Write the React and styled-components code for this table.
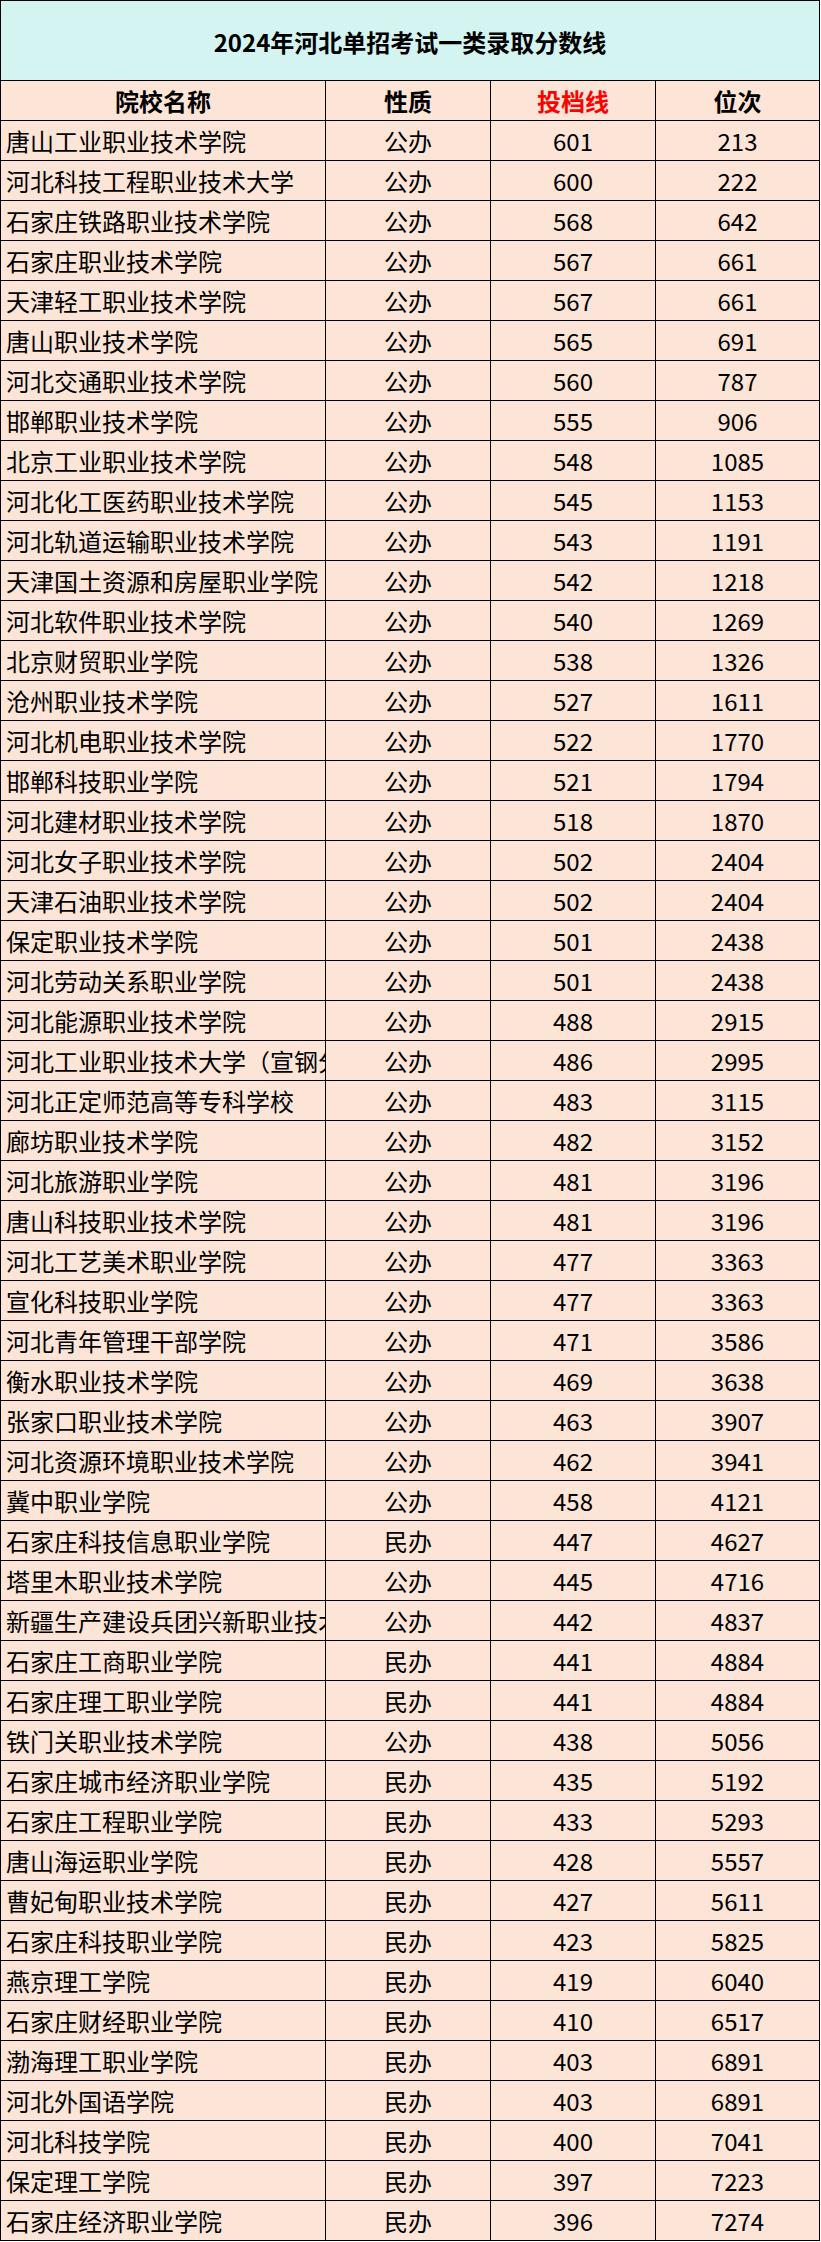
import React from "react";
import styled, { createGlobalStyle } from "styled-components";

const GlobalStyle = createGlobalStyle`
   html, body {
      margin: 0;
      padding: 0;
      background: #ffffff;
   }
   body {
      font-family: "Noto Sans CJK SC", "Noto Sans", sans-serif;
      color: #000;
   }
`;

const Table = styled.div`
   width: 820px;
   border-top: 1px solid #000;
   border-left: 1px solid #000;
   box-sizing: border-box;
`;

const Title = styled.div`
   height: 80px;
   box-sizing: border-box;
   border-right: 1px solid #000;
   border-bottom: 1px solid #000;
   background: #d4f4f2;
   display: flex;
   align-items: center;
   justify-content: center;
   font-size: 24px;
   font-weight: 700;
   padding-top: 2px;
`;

const Row = styled.div`
   display: grid;
   grid-template-columns: 325px 165px 165px 164px;
   height: 40px;
   background: #fce4d6;
`;

const Cell = styled.div`
   box-sizing: border-box;
   border-right: 1px solid #000;
   border-bottom: 1px solid #000;
   display: flex;
   align-items: center;
   justify-content: ${({ left }) => (left ? "flex-start" : "center")};
   padding-left: ${({ left }) => (left ? "5px" : "0")};
   font-size: 24px;
   font-weight: ${({ head }) => (head ? 700 : 400)};
   color: ${({ red }) => (red ? "#ff0000" : "#000")};
   white-space: nowrap;
   overflow: hidden;
   line-height: 1;
`;

const rows = [
   ["唐山工业职业技术学院", "公办", 601, 213],
   ["河北科技工程职业技术大学", "公办", 600, 222],
   ["石家庄铁路职业技术学院", "公办", 568, 642],
   ["石家庄职业技术学院", "公办", 567, 661],
   ["天津轻工职业技术学院", "公办", 567, 661],
   ["唐山职业技术学院", "公办", 565, 691],
   ["河北交通职业技术学院", "公办", 560, 787],
   ["邯郸职业技术学院", "公办", 555, 906],
   ["北京工业职业技术学院", "公办", 548, 1085],
   ["河北化工医药职业技术学院", "公办", 545, 1153],
   ["河北轨道运输职业技术学院", "公办", 543, 1191],
   ["天津国土资源和房屋职业学院", "公办", 542, 1218],
   ["河北软件职业技术学院", "公办", 540, 1269],
   ["北京财贸职业学院", "公办", 538, 1326],
   ["沧州职业技术学院", "公办", 527, 1611],
   ["河北机电职业技术学院", "公办", 522, 1770],
   ["邯郸科技职业学院", "公办", 521, 1794],
   ["河北建材职业技术学院", "公办", 518, 1870],
   ["河北女子职业技术学院", "公办", 502, 2404],
   ["天津石油职业技术学院", "公办", 502, 2404],
   ["保定职业技术学院", "公办", 501, 2438],
   ["河北劳动关系职业学院", "公办", 501, 2438],
   ["河北能源职业技术学院", "公办", 488, 2915],
   ["河北工业职业技术大学（宣钢分校）", "公办", 486, 2995],
   ["河北正定师范高等专科学校", "公办", 483, 3115],
   ["廊坊职业技术学院", "公办", 482, 3152],
   ["河北旅游职业学院", "公办", 481, 3196],
   ["唐山科技职业技术学院", "公办", 481, 3196],
   ["河北工艺美术职业学院", "公办", 477, 3363],
   ["宣化科技职业学院", "公办", 477, 3363],
   ["河北青年管理干部学院", "公办", 471, 3586],
   ["衡水职业技术学院", "公办", 469, 3638],
   ["张家口职业技术学院", "公办", 463, 3907],
   ["河北资源环境职业技术学院", "公办", 462, 3941],
   ["冀中职业学院", "公办", 458, 4121],
   ["石家庄科技信息职业学院", "民办", 447, 4627],
   ["塔里木职业技术学院", "公办", 445, 4716],
   ["新疆生产建设兵团兴新职业技术学院", "公办", 442, 4837],
   ["石家庄工商职业学院", "民办", 441, 4884],
   ["石家庄理工职业学院", "民办", 441, 4884],
   ["铁门关职业技术学院", "公办", 438, 5056],
   ["石家庄城市经济职业学院", "民办", 435, 5192],
   ["石家庄工程职业学院", "民办", 433, 5293],
   ["唐山海运职业学院", "民办", 428, 5557],
   ["曹妃甸职业技术学院", "民办", 427, 5611],
   ["石家庄科技职业学院", "民办", 423, 5825],
   ["燕京理工学院", "民办", 419, 6040],
   ["石家庄财经职业学院", "民办", 410, 6517],
   ["渤海理工职业学院", "民办", 403, 6891],
   ["河北外国语学院", "民办", 403, 6891],
   ["河北科技学院", "民办", 400, 7041],
   ["保定理工学院", "民办", 397, 7223],
   ["石家庄经济职业学院", "民办", 396, 7274],
];

const App = () => {
   return (
      <>
         <GlobalStyle />
         <Table>
            <Title>2024年河北单招考试一类录取分数线</Title>
            <Row>
               <Cell head>院校名称</Cell>
               <Cell head>性质</Cell>
               <Cell head red>投档线</Cell>
               <Cell head>位次</Cell>
            </Row>
            {rows.map((r, i) => (
               <Row key={i}>
                  <Cell left>{r[0]}</Cell>
                  <Cell>{r[1]}</Cell>
                  <Cell>{r[2]}</Cell>
                  <Cell>{r[3]}</Cell>
               </Row>
            ))}
         </Table>
      </>
   );
};

export default App;
